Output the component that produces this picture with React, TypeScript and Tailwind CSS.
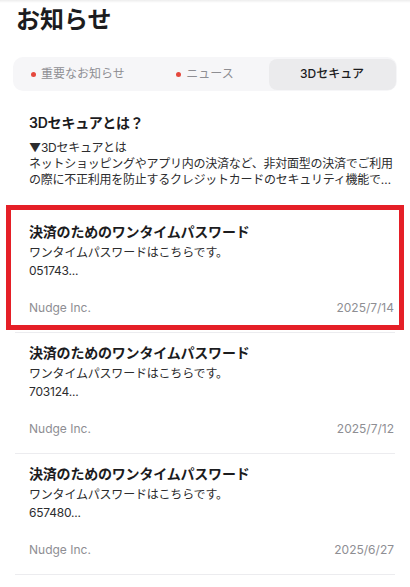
import React from "react"

type Notice = {
  title: string
  lines: string[]
  sender?: string
  date?: string
  highlighted?: boolean
}

const notices: Notice[] = [
  {
    title: "決済のためのワンタイムパスワード",
    lines: ["ワンタイムパスワードはこちらです。", "051743..."],
    sender: "Nudge Inc.",
    date: "2025/7/14",
    highlighted: true,
  },
  {
    title: "決済のためのワンタイムパスワード",
    lines: ["ワンタイムパスワードはこちらです。", "703124..."],
    sender: "Nudge Inc.",
    date: "2025/7/12",
  },
  {
    title: "決済のためのワンタイムパスワード",
    lines: ["ワンタイムパスワードはこちらです。", "657480..."],
    sender: "Nudge Inc.",
    date: "2025/6/27",
  },
]

const tabs = [
  { label: "重要なお知らせ", dot: true },
  { label: "ニュース", dot: true },
  { label: "3Dセキュア", dot: false, active: true },
]

function NoticeRow({ title, lines, sender, date, highlighted }: Notice) {
  return (
    <div className="relative border-b border-[#ececef] pl-[14px] pr-[1px] pt-[10px] pb-[16px]">
      <p className="text-[14px] leading-[20px] font-semibold tracking-[-0.2px] text-[#1c1c1e]">{title}</p>
      <p className="mt-[2px] text-[12px] leading-[18px] tracking-[-0.2px] text-[#2c2c2e]">
        {lines[0]}
        <br />
        {lines[1]}
      </p>
      <div className="mt-[20px] flex justify-between text-[12px] leading-[16px] text-[#8e8e93]">
        <span>{sender}</span>
        <span>{date}</span>
      </div>
      {highlighted && (
        <div className="pointer-events-none absolute -left-[9px] -right-[9px] -top-[7px] bottom-[2px] border-[5px] border-[#e51f27]" />
      )}
    </div>
  )
}

export default function App() {
  return (
    <div className="min-h-screen bg-white font-[Inter,'Noto_Sans_CJK_JP',sans-serif] text-[#1c1c1e]">
      <div className="h-[3px] bg-gradient-to-b from-[#ededed] to-white" />
      <h1 className="px-4 pt-[3px] text-[24px] leading-[28px] font-bold">お知らせ</h1>

      {/* tabs */}
      <div className="mx-[13px] mt-[23px] grid h-[34px] grid-cols-3 rounded-[10px] bg-[#f6f6f8] p-[1.5px]">
        {tabs.map((t) => (
          <div
            key={t.label}
            className={
              t.active
                ? "flex items-center justify-center rounded-[8px] bg-[#ebebed] text-[12px] font-medium text-[#1c1c1e]"
                : "flex items-center justify-center gap-[5px] text-[12px] text-[#8e8e93]"
            }
          >
            {t.dot && <span className="h-[5px] w-[5px] rounded-full bg-[#e5483d]" />}
            {t.label}
          </div>
        ))}
      </div>

      {/* list */}
      <div className="mx-[15px]">
        <div className="pl-[14px] pr-[1px] pt-[22px] pb-[24px]">
          <p className="text-[14px] leading-[20px] font-semibold tracking-[-0.2px]">3Dセキュアとは？</p>
          <div className="mt-[7px] whitespace-nowrap text-[12px] leading-[16px] tracking-[-0.25px] text-[#2c2c2e]">
            <p>▼3Dセキュアとは</p>
            <p>ネットショッピングやアプリ内の決済など、非対面型の決済でご利用</p>
            <p>の際に不正利用を防止するクレジットカードのセキュリティ機能で…</p>
          </div>
        </div>
        {notices.map((n, i) => (
          <NoticeRow key={i} {...n} />
        ))}
      </div>
    </div>
  )
}
